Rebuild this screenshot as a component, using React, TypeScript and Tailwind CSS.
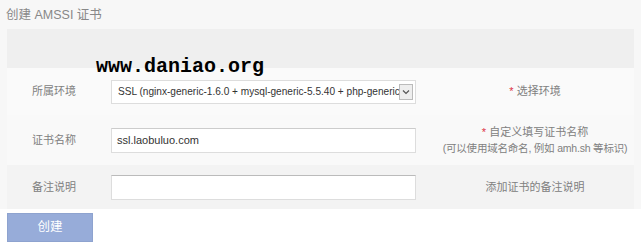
export default function App() {
  const font = { fontFamily: '"Liberation Sans", "Noto Sans CJK SC", sans-serif' };
  return (
    <div className="relative h-[250px] w-[641px] bg-[#f7f7f7] text-[11px] text-[#808080]" style={font}>
      {/* 标题 */}
      <div className="h-[29px] pl-[6px] pt-[6px] text-[12.5px] text-[#888]">创建 AMSSI 证书</div>

      {/* 表单 */}
      <div className="mx-[7px] w-[627px] bg-[#f8f8f8]">
        <div className="h-[39px] bg-[#efefef]" />

        <div className="flex h-[47px] items-center bg-[#fafafa]">
          <div className="w-[94px] text-center">所属环境</div>
          <div className="ml-[10px] flex h-[24px] w-[305px] items-center border border-[#ddd] bg-white pl-[6px] text-[10.1px] text-[#333]">
            <span className="flex-1 overflow-hidden whitespace-nowrap">
              SSL (nginx-generic-1.6.0 + mysql-generic-5.5.40 + php-generic-5.4
            </span>
            <span className="mr-[2px] flex h-[16px] w-[14px] items-center justify-center border border-[#bbb] bg-[#eee]">
              <svg width="8" height="6" viewBox="0 0 8 6">
                <path d="M1 1.5L4 4.5L7 1.5" stroke="#555" strokeWidth="1.2" fill="none" />
              </svg>
            </span>
          </div>
          <div className="flex-1 pl-[20px] text-center">
            <span className="text-[#d34]">* </span>选择环境
          </div>
        </div>

        <div className="flex h-[50px] items-center bg-[#f9f9f9]">
          <div className="w-[94px] text-center">证书名称</div>
          <div className="ml-[10px] flex h-[25px] w-[305px] items-center border border-[#ddd] border-t-[#ccc] bg-white pl-[5px] text-[11px] text-[#333]">
            ssl.laobuluo.com
          </div>
          <div className="flex-1 pl-[20px] text-center leading-[16px]">
            <div>
              <span className="text-[#d34]">* </span>自定义填写证书名称
            </div>
            <div className="whitespace-nowrap text-[10.5px] tracking-[-0.2px]">
              (可以使用域名命名, 例如 amh.sh 等标识)
            </div>
          </div>
        </div>

        <div className="flex h-[44px] items-center bg-[#f3f3f3]">
          <div className="w-[94px] text-center">备注说明</div>
          <div className="ml-[10px] h-[25px] w-[305px] border border-[#ddd] border-t-[#bbb] bg-white" />
          <div className="flex-1 pl-[20px] text-center">添加证书的备注说明</div>
        </div>
      </div>

      <div className="bg-white pl-[7px] pt-[4px] pb-[8px]">
        <button className="h-[29px] w-[86px] border border-[#8ea3cf] bg-[#97acd9] text-[12.5px] text-white">
          创建
        </button>
      </div>

      {/* 水印 */}
      <div
        className="absolute left-[96px] top-[57px] text-[20px] font-bold leading-none text-black"
        style={{ fontFamily: '"Liberation Mono", monospace' }}
      >
        www.daniao.org
      </div>
    </div>
  );
}
